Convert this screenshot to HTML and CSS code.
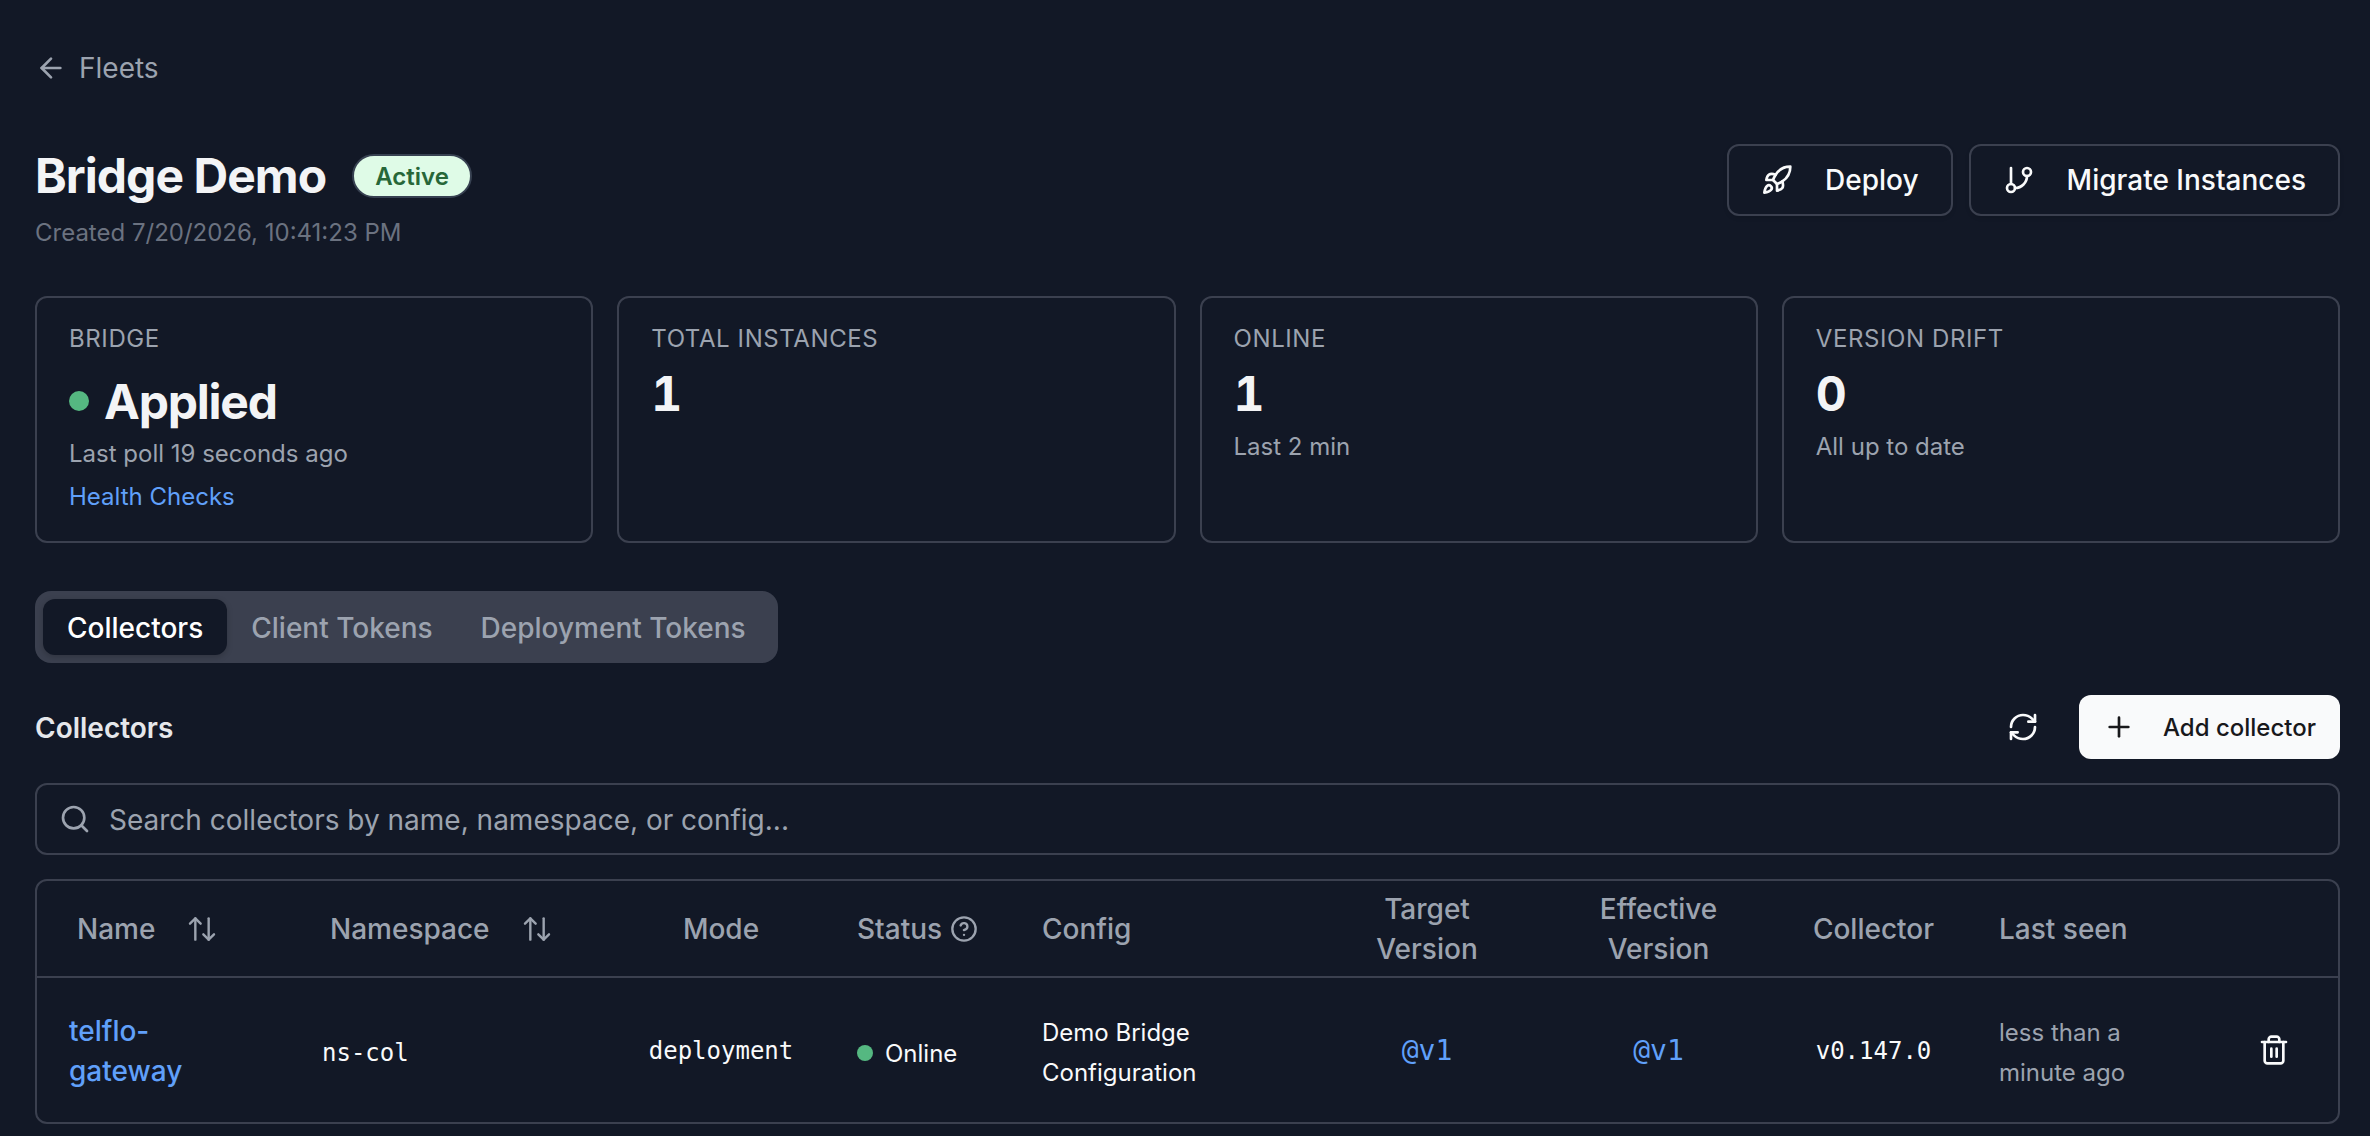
FILE: index.html
```
<!DOCTYPE html>
<html lang="en">
<head>
    <meta charset="UTF-8">
    <meta name="viewport" content="width=device-width, initial-scale=1.0">
    <title>Bridge Demo - Fleets</title>
    <link rel="stylesheet" href="styles.css">
</head>
<body>

<div class="page">
    <a href="#" class="back-link">
        <svg class="icon" width="32" height="32" viewBox="0 0 24 24"><path d="m12 19-7-7 7-7"/><path d="M19 12H5"/></svg>
        <span>Fleets</span>
    </a>

    <header class="fleet-header">
        <div>
            <div class="title-row">
                <h1>Bridge Demo</h1>
                <span class="badge">Active</span>
            </div>
            <p class="created">Created 7/20/2026, 10:41:23 PM</p>
        </div>
        <div class="actions">
            <button class="button">
                <svg class="icon" width="32" height="32" viewBox="0 0 24 24"><path d="M4.5 16.5c-1.5 1.26-2 5-2 5s3.74-.5 5-2c.71-.84.7-2.13-.09-2.91a2.18 2.18 0 0 0-2.91-.09z"/><path d="m12 15-3-3a22 22 0 0 1 2-3.95A12.88 12.88 0 0 1 22 2c0 2.72-.78 7.5-6 11a22.35 22.35 0 0 1-4 2z"/><path d="M9 12H4s.55-3.03 2-4c1.62-1.08 5 0 5 0"/><path d="M12 15v5s3.03-.55 4-2c1.08-1.62 0-5 0-5"/></svg>
                <span>Deploy</span>
            </button>
            <button class="button">
                <svg class="icon" width="32" height="32" viewBox="0 0 24 24"><path d="M6 3v12"/><circle cx="18" cy="6" r="3"/><circle cx="6" cy="18" r="3"/><path d="M18 9a9 9 0 0 1-9 9"/></svg>
                <span>Migrate Instances</span>
            </button>
        </div>
    </header>

    <section class="cards">
        <div class="card">
            <div class="card-label">Bridge</div>
            <div class="card-value card-status"><span class="dot"></span>Applied</div>
            <div class="card-note">Last poll 19 seconds ago</div>
            <a href="#" class="card-link">Health Checks</a>
        </div>
        <div class="card">
            <div class="card-label">Total Instances</div>
            <div class="card-value">1</div>
        </div>
        <div class="card">
            <div class="card-label">Online</div>
            <div class="card-value">1</div>
            <div class="card-note">Last 2 min</div>
        </div>
        <div class="card">
            <div class="card-label">Version Drift</div>
            <div class="card-value">0</div>
            <div class="card-note">All up to date</div>
        </div>
    </section>

    <nav class="tabs">
        <button class="tab active">Collectors</button>
        <button class="tab">Client Tokens</button>
        <button class="tab">Deployment Tokens</button>
    </nav>

    <div class="section-header">
        <h2>Collectors</h2>
        <div class="section-actions">
            <button class="icon-button">
                <svg class="icon" width="32" height="32" viewBox="0 0 24 24"><path d="M3 12a9 9 0 0 1 9-9 9.75 9.75 0 0 1 6.74 2.74L21 8"/><path d="M21 3v5h-5"/><path d="M21 12a9 9 0 0 1-9 9 9.75 9.75 0 0 1-6.74-2.74L3 16"/><path d="M8 16H3v5"/></svg>
            </button>
            <button class="add-button">
                <svg class="icon" width="32" height="32" viewBox="0 0 24 24"><path d="M5 12h14"/><path d="M12 5v14"/></svg>
                <span>Add collector</span>
            </button>
        </div>
    </div>

    <div class="search">
        <svg class="icon" width="32" height="32" viewBox="0 0 24 24"><circle cx="11" cy="11" r="8"/><path d="m21 21-4.3-4.3"/></svg>
        <input type="text" placeholder="Search collectors by name, namespace, or config...">
    </div>

    <div class="table-box">
        <table>
            <colgroup>
                <col class="col-name">
                <col class="col-namespace">
                <col class="col-mode">
                <col class="col-status">
                <col class="col-config">
                <col class="col-target">
                <col class="col-effective">
                <col class="col-collector">
                <col class="col-seen">
                <col class="col-delete">
            </colgroup>
            <thead>
                <tr>
                    <th>
                        <div class="sort">Name
                            <svg class="icon" width="32" height="32" viewBox="0 0 24 24"><path d="m3 8 4-4 4 4"/><path d="M7 4v16"/><path d="m21 16-4 4-4-4"/><path d="M17 20V4"/></svg>
                        </div>
                    </th>
                    <th>
                        <div class="sort">Namespace
                            <svg class="icon" width="32" height="32" viewBox="0 0 24 24"><path d="m3 8 4-4 4 4"/><path d="M7 4v16"/><path d="m21 16-4 4-4-4"/><path d="M17 20V4"/></svg>
                        </div>
                    </th>
                    <th class="center">Mode</th>
                    <th>
                        <div class="help">Status
                            <svg class="icon" width="28" height="28" viewBox="0 0 24 24"><circle cx="12" cy="12" r="10"/><path d="M9.09 9a3 3 0 0 1 5.83 1c0 2-3 3-3 3"/><path d="M12 17h.01"/></svg>
                        </div>
                    </th>
                    <th>Config</th>
                    <th class="center">Target<br>Version</th>
                    <th class="center">Effective<br>Version</th>
                    <th class="center">Collector</th>
                    <th>Last seen</th>
                    <th></th>
                </tr>
            </thead>
            <tbody>
                <tr>
                    <td><a href="#" class="name-link">telflo-<br>gateway</a></td>
                    <td class="mono namespace">ns-col</td>
                    <td class="mono center">deployment</td>
                    <td class="status"><div class="online"><span class="dot"></span>Online</div></td>
                    <td class="config">Demo Bridge<br>Configuration</td>
                    <td class="mono center"><a href="#" class="version-link">@v1</a></td>
                    <td class="mono center"><a href="#" class="version-link">@v1</a></td>
                    <td class="mono center">v0.147.0</td>
                    <td class="muted">less than a<br>minute ago</td>
                    <td class="delete">
                        <svg class="icon" width="32" height="32" viewBox="0 0 24 24"><path d="M3 6h18"/><path d="M19 6v14c0 1-1 2-2 2H7c-1 0-2-1-2-2V6"/><path d="M8 6V4c0-1 1-2 2-2h4c1 0 2 1 2 2v2"/><path d="M10 11v6"/><path d="M14 11v6"/></svg>
                    </td>
                </tr>
            </tbody>
        </table>
    </div>
</div>

</body>
</html>
```
FILE: styles.css
```
* {
    box-sizing: border-box;
}
body {
    margin: 0;
    height: 1136px;
    overflow: hidden;
    background: #121826;
    color: #f9fafb;
    font-family: Inter, sans-serif;
    font-size: 28px;
    line-height: 40px;
}
h1, h2, p {
    margin: 0;
}
a {
    color: #60a0fa;
    text-decoration: none;
}
button {
    font-family: inherit;
    font-size: 28px;
    font-weight: 500;
    line-height: 40px;
    border: none;
    color: #f9fafb;
    background: none;
    cursor: pointer;
}
.icon {
    display: block;
    flex-shrink: 0;
    fill: none;
    stroke: currentColor;
    stroke-width: 2;
    stroke-linecap: round;
    stroke-linejoin: round;
}
.page {
    padding: 48px 30px 0 35px;
}
.back-link {
    display: flex;
    align-items: center;
    gap: 12px;
    color: #9ca3af;
}

/* Header */
.fleet-header {
    display: flex;
    justify-content: space-between;
    align-items: flex-start;
    margin-top: 56px;
}
.title-row {
    display: flex;
    align-items: center;
    gap: 26px;
}
h1 {
    font-size: 48px;
    line-height: 64px;
    font-weight: 700;
    letter-spacing: -0.02em;
    color: #f3f4f6;
}
.badge {
    height: 44px;
    padding: 5px 21px 3px;
    border: 2px solid #374151;
    border-radius: 22px;
    background: #dffbe7;
    color: #276738;
    font-size: 24px;
    line-height: 32px;
    font-weight: 600;
}
.created {
    margin-top: 9px;
    font-size: 24px;
    line-height: 32px;
    color: #6b7280;
}
.actions {
    display: flex;
    gap: 16px;
}
.button {
    display: flex;
    align-items: center;
    gap: 32px;
    height: 72px;
    padding: 0 32px;
    border: 2px solid #3b404f;
    border-radius: 12px;
    box-shadow: 0 2px 4px rgba(0, 0, 0, 0.1);
}

/* Cards */
.cards {
    display: grid;
    grid-template-columns: repeat(4, 1fr);
    gap: 24px;
    margin-top: 47px;
}
.card {
    height: 247px;
    padding: 25px 32px 0;
    border: 2px solid #3b404f;
    border-radius: 12px;
    font-size: 24px;
    line-height: 32px;
    color: #9ca3af;
}
.card-label {
    text-transform: uppercase;
    letter-spacing: 0.025em;
}
.card-value {
    margin-top: 7px;
    font-size: 48px;
    line-height: 64px;
    font-weight: 700;
    letter-spacing: -0.025em;
    font-variant-numeric: tabular-nums;
    color: #f3f4f6;
}
.card-status {
    display: flex;
    align-items: center;
    gap: 15px;
    margin-top: 15px;
}
.dot {
    width: 16px;
    height: 16px;
    border-radius: 50%;
    background: #55b881;
}
.card-status .dot {
    width: 20px;
    height: 20px;
    margin-bottom: 2px;
}
.card-note {
    margin-top: 5px;
}
.card-status + .card-note {
    margin-top: 4px;
}
.card-link {
    display: block;
    margin-top: 11px;
}

/* Tabs */
.tabs {
    display: inline-flex;
    height: 72px;
    margin-top: 48px;
    padding: 8px;
    border-radius: 16px;
    background: #3b404f;
    vertical-align: top;
}
.tab {
    padding: 9px 24px 7px;
    border-radius: 12px;
    color: #9ca3af;
}
.tab.active {
    background: #121826;
    color: #ffffff;
    box-shadow: 0 2px 6px rgba(0, 0, 0, 0.2);
}

/* Collectors */
.section-header {
    display: flex;
    justify-content: space-between;
    align-items: center;
    height: 64px;
    margin-top: 32px;
}
h2 {
    padding-top: 2px;
    font-size: 28px;
    font-weight: 600;
    color: #e5e7eb;
}
.section-actions {
    display: flex;
    gap: 24px;
}
.icon-button {
    padding: 16px;
}
.add-button {
    display: flex;
    align-items: center;
    gap: 28px;
    height: 64px;
    padding: 0 24px;
    border-radius: 12px;
    background: #f9fafb;
    color: #18181b;
    font-size: 24px;
}
.add-button span {
    padding-top: 1px;
}
.search {
    display: flex;
    align-items: center;
    gap: 18px;
    height: 72px;
    margin-top: 24px;
    padding: 0 22px;
    border: 2px solid #3b404f;
    border-radius: 12px;
    color: #9ca3af;
}
.search input {
    flex: 1;
    padding: 2px 0 0;
    border: none;
    outline: none;
    background: none;
    color: #f9fafb;
    font-family: inherit;
    font-size: 28px;
}
.search input::placeholder {
    color: #9ca3af;
}

/* Table */
.table-box {
    margin-top: 24px;
    border: 2px solid #3b404f;
    border-radius: 12px;
}
table {
    width: 100%;
    table-layout: fixed;
    border-spacing: 0;
}
.col-name { width: 253px; }
.col-namespace { width: 327px; }
.col-mode { width: 208px; }
.col-status { width: 185px; }
.col-config { width: 307px; }
.col-target { width: 220px; }
.col-effective { width: 243px; }
.col-collector { width: 187px; }
.col-seen { width: 243px; }
th {
    height: 97px;
    padding: 0 32px;
    border-bottom: 2px solid #3b404f;
    color: #9ca3af;
    font-weight: 500;
    text-align: left;
}
td {
    height: 144px;
    padding: 0 32px;
    font-size: 24px;
    white-space: nowrap;
}
.center {
    padding: 0;
    text-align: center;
}
.sort {
    display: flex;
    align-items: center;
    gap: 31px;
    padding-left: 8px;
}
.help {
    display: flex;
    align-items: center;
    gap: 8px;
}
.sort .icon {
    stroke-width: 1.8;
}
.name-link {
    display: block;
    padding-top: 2px;
    font-size: 28px;
    font-weight: 500;
}
.mono {
    padding-top: 2px;
    font-family: "DejaVu Sans Mono", monospace;
}
.namespace {
    padding-top: 5px;
}
.version-link {
    font-size: 28px;
}
.status {
    padding-top: 7px;
}
.online {
    display: flex;
    align-items: center;
    gap: 12px;
}
.online .dot {
    margin-bottom: 2px;
}
.config,
.muted {
    padding-top: 5px;
}
.muted {
    color: #9ca3af;
}
.delete {
    padding: 0 48px;
}
```
